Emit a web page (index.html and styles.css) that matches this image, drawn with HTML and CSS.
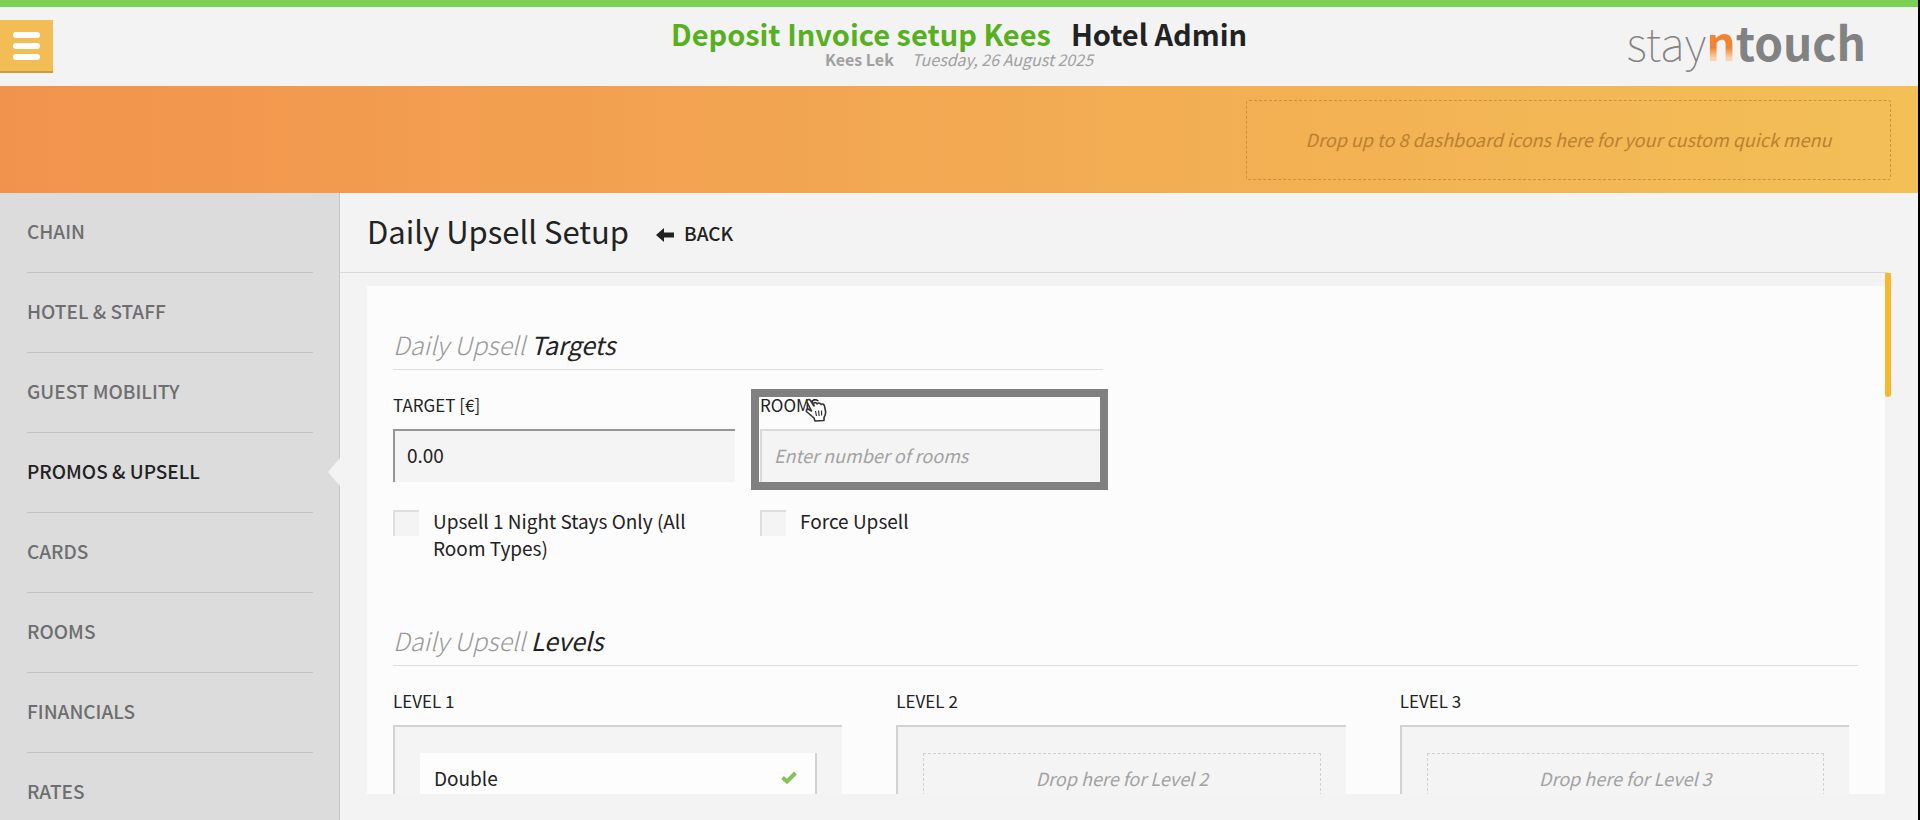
FILE: index.html
```html
<!DOCTYPE html>
<html lang="en">
<head>
    <meta charset="UTF-8">
    <meta name="viewport" content="width=device-width, initial-scale=1.0">
    <title>Daily Upsell Setup</title>
    <link rel="stylesheet" href="styles.css">
</head>
<body>
    <header class="top-header">
        <button class="menu-button" type="button" aria-label="Menu">
            <span></span>
            <span></span>
            <span></span>
        </button>
        <div class="header-title">
            <h1><span class="hotel-name">Deposit Invoice setup Kees</span> <span>Hotel Admin</span></h1>
            <p><strong>Kees Lek</strong> <em>Tuesday, 26 August 2025</em></p>
        </div>
        <div class="logo"><span class="logo-thin">stay</span><span class="logo-n">n</span><span class="logo-bold">touch</span></div>
    </header>

    <div class="quick-menu">
        <div class="quick-drop">Drop up to 8 dashboard icons here for your custom quick menu</div>
    </div>

    <div class="page">
        <nav class="sidebar">
            <a href="#">Chain</a>
            <a href="#">Hotel &amp; Staff</a>
            <a href="#">Guest Mobility</a>
            <a href="#" class="active">Promos &amp; Upsell</a>
            <a href="#">Cards</a>
            <a href="#">Rooms</a>
            <a href="#">Financials</a>
            <a href="#">Rates</a>
        </nav>

        <main class="content">
            <div class="content-header">
                <h2>Daily Upsell Setup</h2>
                <button class="back-button" type="button">
                    <svg width="18" height="14" viewBox="0 0 18 14"><path d="M0 7 L8 0 V4.500 H18 V9.500 H8 V14 Z" fill="#222"/></svg>
                    Back
                </button>
            </div>

            <div class="scroll-area">
                <div class="scroll-thumb"></div>
                <form class="panel">
                    <section class="targets">
                        <h3><span>Daily Upsell</span> Targets</h3>
                        <div class="form-grid">
                            <div class="field">
                                <label for="target">Target [€]</label>
                                <input type="text" id="target" class="filled" value="0.00">
                            </div>
                            <div class="field highlighted">
                                <label for="rooms">Rooms</label>
                                <input type="text" id="rooms" placeholder="Enter number of rooms">
                                <svg class="pointer" width="22" height="24" viewBox="0 0 22 24"><path d="M2 4 C1 2 4 0.500 5.500 2.500 L9 8 L8.500 5.500 C9 4 11 4 12 6 C12.500 4.500 15 4.500 16 6.500 C17 5.500 19 6 19.500 8 L20.500 13 C21 16 20 18 19 19.500 L19 22.500 L10 23 L9 20 L2 14 C0.500 12.500 2 10.500 4 11.500 L6.500 13 Z" fill="#fff" stroke="#333" stroke-width="1.600" stroke-linejoin="round"/><path d="M10.500 13 L11.500 18 M13.500 12.500 L14.200 18 M16.500 12.500 L16.700 17.500" stroke="#333" stroke-width="1.200"/></svg>
                            </div>
                            <label class="check"><input type="checkbox"><span>Upsell 1 Night Stays Only (All Room Types)</span></label>
                            <label class="check"><input type="checkbox"><span>Force Upsell</span></label>
                        </div>
                    </section>

                    <section class="levels">
                        <h3><span>Daily Upsell</span> Levels</h3>
                        <div class="level-grid">
                            <div class="level">
                                <h4>Level 1</h4>
                                <div class="level-box">
                                    <div class="room-type">
                                        Double
                                        <svg width="16" height="13" viewBox="0 0 16 13"><path d="M1.500 6.500 L6 10.500 L14.500 2" fill="none" stroke="#83c35a" stroke-width="4"/></svg>
                                    </div>
                                </div>
                            </div>
                            <div class="level">
                                <h4>Level 2</h4>
                                <div class="level-box">
                                    <div class="level-drop">Drop here for Level 2</div>
                                </div>
                            </div>
                            <div class="level">
                                <h4>Level 3</h4>
                                <div class="level-box">
                                    <div class="level-drop">Drop here for Level 3</div>
                                </div>
                            </div>
                        </div>
                    </section>
                </form>
            </div>
        </main>
    </div>
</body>
</html>
```
FILE: styles.css
```css
* {
    box-sizing: border-box;
}
body {
    display: flex;
    flex-direction: column;
    height: 100vh;
    margin: 0;
    overflow: hidden;
    border-right: 2px solid #000;
    background-color: #f3f3f3;
    color: #222;
    font-family: "Noto Sans CJK SC", "Noto Sans", sans-serif;
    font-size: 19px;
    line-height: 27px;
}
h1, h2, h3, h4, p {
    margin: 0;
    font-weight: normal;
}
button, input {
    font: inherit;
    color: inherit;
}

/* header */
.top-header {
    display: grid;
    grid-template-columns: 1fr auto 1fr;
    align-items: start;
    flex: none;
    height: 86px;
    border-top: 7px solid #7bd252;
}
.menu-button {
    display: flex;
    flex-direction: column;
    align-items: center;
    justify-content: center;
    gap: 5px;
    width: 53px;
    height: 53px;
    margin-top: 13px;
    padding: 0;
    border: none;
    border-bottom: 2px solid #c99c46;
    background-color: #f3bd56;
    cursor: pointer;
}
.menu-button span {
    width: 27px;
    height: 6px;
    border-radius: 3px;
    background-color: #fff;
}
.header-title {
    padding-top: 9px;
    text-align: center;
}
.header-title h1 {
    display: flex;
    gap: 20px;
    font-size: 29px;
    font-weight: bold;
    line-height: 34px;
}
.header-title p {
    display: flex;
    justify-content: center;
    gap: 18px;
    color: #a0a0a0;
    font-size: 16px;
    line-height: 18px;
}
.hotel-name {
    color: #58b01f;
}
.logo {
    justify-self: end;
    margin-right: 52px;
    padding-top: 4px;
    color: #828282;
    font-size: 46px;
    line-height: 60px;
}
.logo-thin {
    font-weight: 100;
}
.logo-n {
    background: linear-gradient(#ee8434 60%, #fbd3b0 76%);
    background-clip: text;
    -webkit-background-clip: text;
    color: transparent;
    font-weight: bold;
}
.logo-bold {
    font-weight: bold;
}

/* quick menu */
.quick-menu {
    display: flex;
    justify-content: flex-end;
    flex: none;
    padding: 14px 27px 13px;
    background: linear-gradient(to right, #f2934d, #f3bf57);
}
.quick-drop {
    width: 34%;
    min-width: 645px;
    padding: 25px 0 26px;
    border: 1px dashed #cc9140;
    border-radius: 3px;
    color: #ba802f;
    font-size: 18px;
    font-style: italic;
    text-align: center;
}

/* sidebar */
.page {
    display: flex;
    flex: 1;
    min-height: 0;
}
.sidebar {
    flex: none;
    width: 340px;
    padding: 0 26px 0 27px;
    border-right: 1px solid #c8c8c8;
    background-color: #dcdcdc;
}
.sidebar a {
    position: relative;
    display: block;
    height: 80px;
    padding-top: 24px;
    border-bottom: 1px solid #c2c2c2;
    color: #6e6e6e;
    font-weight: 500;
    text-decoration: none;
    text-transform: uppercase;
}
.sidebar .active {
    color: #222;
}
.sidebar .active::after {
    content: "";
    position: absolute;
    top: 25px;
    right: -27px;
    border: 14px solid transparent;
    border-left: none;
    border-right: 12px solid #f3f3f3;
}

/* content */
.content {
    display: flex;
    flex-direction: column;
    flex: 1;
    min-width: 0;
}
.content-header {
    display: flex;
    align-items: center;
    gap: 27px;
    height: 80px;
    margin-right: 30px;
    padding-left: 27px;
    border-bottom: 1px solid #dadada;
}
.content-header h2 {
    padding-bottom: 4px;
    font-size: 31px;
    line-height: 40px;
}
.back-button {
    display: flex;
    align-items: center;
    gap: 10px;
    padding: 0;
    border: none;
    background: none;
    font-weight: 500;
    text-transform: uppercase;
    cursor: pointer;
}
.back-button svg {
    margin-top: 4px;
}
.scroll-area {
    position: relative;
    display: flex;
    flex: 1;
    min-height: 0;
    padding: 13px 33px 26px 27px;
}
.scroll-thumb {
    position: absolute;
    top: 0;
    right: 27px;
    width: 6px;
    height: 124px;
    border-radius: 0 0 3px 3px;
    background-color: #f5b92b;
}
.panel {
    flex: 1;
    min-width: 0;
    overflow: hidden;
    padding: 41px 27px 40px 26px;
    background-color: #fcfcfc;
}
.panel h3 {
    padding-bottom: 7px;
    border-bottom: 1px solid #dedede;
    font-size: 25px;
    font-style: italic;
    line-height: 35px;
}
.panel h3 span {
    color: #999;
    font-weight: 300;
}
.targets {
    max-width: 710px;
}
.form-grid {
    display: grid;
    grid-template-columns: 342px 342px;
    gap: 25px;
    padding-top: 22px;
}
.field {
    position: relative;
}
.field label, .level h4 {
    display: block;
    font-size: 17px;
    line-height: 25px;
    text-transform: uppercase;
}
.field input {
    display: block;
    width: 100%;
    height: 53px;
    margin-top: 12px;
    padding: 0 12px 5px;
    border: solid #dadada;
    border-width: 2px 0 0 2px;
    background-color: #f4f4f4;
}
.field .filled {
    border-color: #969696;
}
.field input::placeholder {
    color: #a2a2a2;
    font-size: 18px;
    font-style: italic;
    opacity: 1;
}
.highlighted::after {
    content: "";
    position: absolute;
    inset: -3px -6px -8px -9px;
    border: 8px solid #808080;
    pointer-events: none;
}
.pointer {
    position: absolute;
    top: 6px;
    left: 45px;
}
.check {
    display: flex;
    gap: 14px;
}
.check input {
    flex: none;
    appearance: none;
    width: 26px;
    height: 26px;
    margin: 3px 0 0;
    border: solid #dedede;
    border-width: 2px 0 0 2px;
    background-color: #f4f4f4;
}
.levels {
    padding-top: 62px;
}
.level-grid {
    display: grid;
    grid-template-columns: repeat(3, 1fr);
    gap: 54px;
    margin-right: 9px;
    padding-top: 22px;
}
.level-box {
    height: 280px;
    margin-top: 12px;
    padding: 26px 25px;
    border: solid #d2d2d2;
    border-width: 2px 0 0 2px;
    background-color: #f4f4f4;
}
.room-type {
    display: flex;
    align-items: center;
    justify-content: space-between;
    height: 53px;
    padding: 0 18px 4px 14px;
    border-right: 2px solid #d2d2d2;
    background-color: #fdfdfd;
}
.level-drop {
    height: 53px;
    padding-top: 11px;
    border: 1px dashed #d0d0d0;
    color: #a2a2a2;
    font-size: 18px;
    font-style: italic;
    text-align: center;
}
```
